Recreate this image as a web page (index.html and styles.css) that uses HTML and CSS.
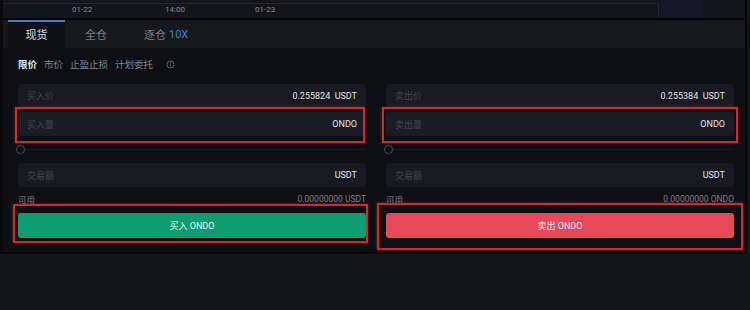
FILE: index.html
```html
<!DOCTYPE html>
<html lang="zh-CN">
<head>
    <meta charset="UTF-8">
    <meta name="viewport" content="width=device-width, initial-scale=1.0">
    <title>现货交易</title>
    <link rel="stylesheet" href="styles.css">
</head>
<body>
    <div class="panel">
        <div class="chart">
            <div class="chart-axis">
                <span class="tick t1">01-22</span>
                <span class="tick t2">14:00</span>
                <span class="tick t3">01-23</span>
            </div>
            <div class="chart-side"></div>
        </div>

        <div class="tabs">
            <div class="tab active">现货</div>
            <div class="tab">全仓</div>
            <div class="tab">逐仓 <span class="lev">10X</span></div>
        </div>

        <div class="form">
            <div class="order-types">
                <span class="type active">限价</span>
                <span class="type">市价</span>
                <span class="type">止盈止损</span>
                <span class="type">计划委托</span>
                <svg class="info" width="9" height="9" viewBox="0 0 10 10">
                    <circle cx="5" cy="5" r="4" fill="none" stroke="#6b6e77" stroke-width="1"/>
                    <line x1="5" y1="4.3" x2="5" y2="7.3" stroke="#6b6e77" stroke-width="1"/>
                    <circle cx="5" cy="2.9" r="0.6" fill="#6b6e77"/>
                </svg>
            </div>

            <div class="cols">
                <div class="col buy">
                    <div class="field"><span class="ph">买入价</span><span class="val">0.255824&nbsp; USDT</span></div>
                    <div class="field qty"><span class="ph">买入量</span><span class="val">ONDO</span></div>
                    <div class="slider"><span class="knob"></span><span class="track"></span></div>
                    <div class="field amount"><span class="ph">交易额</span><span class="val">USDT</span></div>
                    <div class="avail"><span>可用</span><span>0.00000000 USDT</span></div>
                    <button class="btn btn-buy">买入 ONDO</button>
                    <div class="mark mark-qty"></div>
                    <div class="mark mark-btn"></div>
                </div>
                <div class="col sell">
                    <div class="field"><span class="ph">卖出价</span><span class="val">0.255384&nbsp; USDT</span></div>
                    <div class="field qty"><span class="ph">卖出量</span><span class="val">ONDO</span></div>
                    <div class="slider"><span class="knob"></span><span class="track"></span></div>
                    <div class="field amount"><span class="ph">交易额</span><span class="val">USDT</span></div>
                    <div class="avail"><span>可用</span><span>0.00000000 ONDO</span></div>
                    <button class="btn btn-sell">卖出 ONDO</button>
                    <div class="mark mark-qty"></div>
                    <div class="mark mark-btn"></div>
                </div>
            </div>
        </div>
    </div>
</body>
</html>
```

FILE: styles.css
```css
body { margin: 0; background: #141518; font-family: Roboto, "Noto Sans CJK SC", sans-serif; width: 750px; height: 310px; overflow: hidden; }
.panel { width: 742px; border-left: 3px solid #0a0a0c; border-right: 2px solid #050506; border-bottom: 2px solid #060607; background: #0e0f12; }

.chart { height: 18px; background: #14151a; border-bottom: 2px solid #050506; display: flex; }
.chart-axis { width: 655px; border-top: 1px solid #26272d; border-right: 1px solid #26272d; margin-top: 3px; position: relative; }
.tick { position: absolute; top: 1px; font-size: 8px; color: #858892; }
.t1 { left: 69px; }
.t2 { left: 162px; }
.t3 { left: 252px; }
.chart-side { width: 42px; margin-left: 2px; background: #16172a; }

.tabs { height: 28px; background: #17181c; display: flex; align-items: stretch; }
.tab { font-size: 11px; color: #7b7e88; display: flex; align-items: center; white-space: nowrap; }
.tab.active { background: #101114; color: #dcdde0; border-top: 2px solid #4a7cb3; margin-left: 5px; width: 57px; justify-content: center; box-sizing: border-box; padding-bottom: 2px; }
.tab:nth-child(2) { padding: 0 17px 0 20px; }
.tab:nth-child(3) { padding-left: 20px; }
.lev { color: #3b80d4; margin-left: 3px; }

.form { height: 204px; padding: 10px 11px 0 15px; box-sizing: border-box; }
.order-types { display: flex; align-items: center; gap: 7px; font-size: 9.5px; color: #858891; height: 12px; }
.type.active { color: #e6e6e8; font-weight: bold; }
.info { margin-left: 6px; }

.cols { display: grid; grid-template-columns: 348px 348px; column-gap: 20px; margin-top: 14px; }
.col { position: relative; display: flex; flex-direction: column; }
.field { height: 23px; background: #1a1b22; border-radius: 4px; display: flex; align-items: center; justify-content: space-between; padding: 0 9px; font-size: 9px; }
.field.qty { margin-top: 5px; height: 24px; background: #1b1d26; }
.field.amount { height: 24px; }
.ph { color: #44474f; }
.val { color: #e4e4e6; }

.slider { height: 27px; display: flex; align-items: center; }
.knob { width: 7px; height: 7px; border: 1.5px solid #3c4f66; border-radius: 50%; flex: none; margin-left: -2px; }
.track { flex: 1; height: 1px; background: #1b1d22; }

.avail { height: 23px; display: flex; align-items: center; justify-content: space-between; font-size: 8.5px; color: #7e818a; }
.btn { margin-top: 3px; height: 25px; border: none; border-radius: 3px; color: #f2f2f2; font-family: inherit; font-size: 9px; }
.btn-buy { background: #0e9d70; }
.btn-sell { background: #e8485a; }

.mark { position: absolute; border: 2px solid #cf2a32; box-shadow: 0 0 3px rgba(207, 42, 50, 0.5); box-sizing: border-box; }
.buy .mark-qty { left: -3px; top: 23px; width: 350px; height: 36px; }
.sell .mark-qty { left: -4px; top: 23px; width: 356px; height: 36px; }
.buy .mark-btn { left: -5px; top: 120px; width: 355px; height: 39px; }
.sell .mark-btn { left: -9px; top: 119px; width: 366px; height: 47px; }
```
